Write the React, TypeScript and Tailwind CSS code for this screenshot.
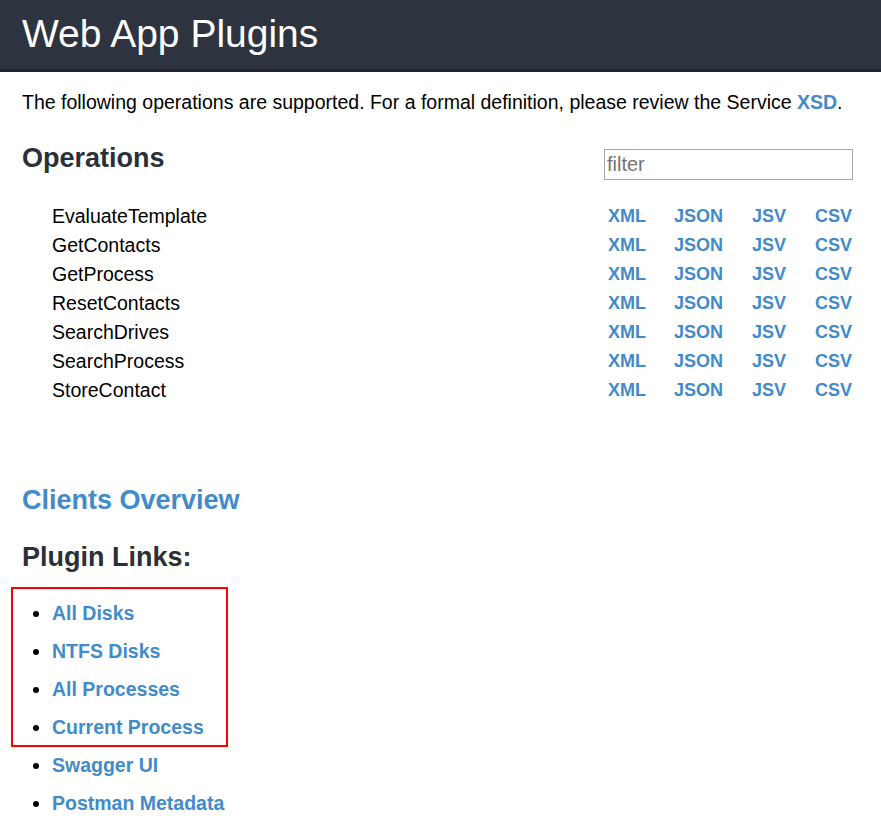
import React from "react";

const ops = [
  "EvaluateTemplate",
  "GetContacts",
  "GetProcess",
  "ResetContacts",
  "SearchDrives",
  "SearchProcess",
  "StoreContact",
];

const plugins = [
  "All Disks",
  "NTFS Disks",
  "All Processes",
  "Current Process",
  "Swagger UI",
  "Postman Metadata",
];

export default function App() {
  return (
    <div
      className="min-h-[831px] bg-white text-black"
      style={{ fontFamily: '"Liberation Sans", Arial, sans-serif' }}
    >
      <div className="h-[72px] bg-[#2d3440] border-b-[3px] border-[#1f242b] pl-[22px] pt-[11px]">
        <h1 className="text-[39px] leading-[45px] text-white font-normal">Web App Plugins</h1>
      </div>

      <div className="pl-[22px] pr-[28px]">
        <p className="mt-[18px] text-[19.5px] leading-[24px]">
          The following operations are supported. For a formal definition, please review the Service{" "}
          <a className="font-bold text-[#428bca]">XSD</a>.
        </p>

        <div className="flex justify-between items-start mt-[28px]">
          <h2 className="text-[27px] leading-[32px] font-bold text-[#2b3038]">Operations</h2>
          <input
            placeholder="filter"
            className="mt-[7px] w-[249px] h-[31px] border border-[#a9a9a9] px-[2px] text-[20px] placeholder:text-[#757575] outline-none"
          />
        </div>

        <div className="mt-[22px] pl-[30px]">
          {ops.map((op) => (
            <div key={op} className="grid grid-cols-[556px_66px_78px_63px_auto] h-[29px] items-center">
              <span className="text-[19.5px]">{op}</span>
              <a className="font-bold text-[18px] text-[#428bca]">XML</a>
              <a className="font-bold text-[18px] text-[#428bca]">JSON</a>
              <a className="font-bold text-[18px] text-[#428bca]">JSV</a>
              <a className="font-bold text-[18px] text-[#428bca]">CSV</a>
            </div>
          ))}
        </div>

        <h3 className="mt-[79px] text-[27px] leading-[32px] font-bold text-[#428bca]">Clients Overview</h3>

        <h3 className="mt-[25px] text-[27px] leading-[32px] font-bold text-[#2b3038]">Plugin Links:</h3>

        <div className="relative mt-[28px]">
          <div className="absolute left-[-11px] top-[-14px] w-[217px] h-[160px] border-2 border-[#ff0000]" />
          <ul className="list-disc pl-[30px]">
            {plugins.map((p) => (
              <li key={p} className="h-[38px] text-[19.5px] leading-[24px] font-bold text-[#428bca] marker:text-black">
                <a>{p}</a>
              </li>
            ))}
          </ul>
        </div>
      </div>
    </div>
  );
}
